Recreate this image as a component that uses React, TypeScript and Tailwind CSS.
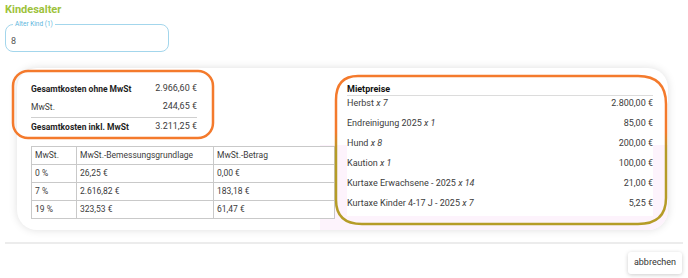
import React from "react";

const summary = [
  { label: "Gesamtkosten ohne MwSt", value: "2.966,60 €", bold: true },
  { label: "MwSt.", value: "244,65 €", bold: false },
];

const taxRows = [
  ["0 %", "26,25 €", "0,00 €"],
  ["7 %", "2.616,82 €", "183,18 €"],
  ["19 %", "323,53 €", "61,47 €"],
];

const prices: { name: string; qty: string; value: string }[] = [
  { name: "Herbst", qty: "x 7", value: "2.800,00 €" },
  { name: "Endreinigung 2025", qty: "x 1", value: "85,00 €" },
  { name: "Hund", qty: "x 8", value: "200,00 €" },
  { name: "Kaution", qty: "x 1", value: "100,00 €" },
  { name: "Kurtaxe Erwachsene - 2025", qty: "x 14", value: "21,00 €" },
  { name: "Kurtaxe Kinder 4-17 J - 2025", qty: "x 7", value: "5,25 €" },
];

export default function App() {
  return (
    <div
      className="relative w-[688px] h-[278px] bg-white overflow-hidden text-[#3c3c3c]"
      style={{ fontFamily: "Roboto, 'Liberation Sans', sans-serif" }}
    >
      <div className="px-[5px] pt-[3px]">
        <h2 className="text-[11px] leading-[14px] font-bold text-[#9dc23b]">Kindesalter</h2>
        <div className="relative mt-[7px] w-[164px] h-[28px] border border-[#a3d6ec] rounded-[8px]">
          <span className="absolute -top-[5px] left-[7px] px-[2px] bg-white text-[6.5px] leading-[8px] text-[#5cb6dc]">
            Alter Kind (1)
          </span>
          <div className="pl-[5px] pt-[10px] text-[9px] leading-[12px] text-[#555]">8</div>
        </div>
      </div>

      <div className="relative ml-[17px] mt-[16px] w-[651px] h-[162px] rounded-[20px] bg-white shadow-[0_0_8px_rgba(0,0,0,0.13)] flex">
        <div className="absolute left-[303px] top-[77px] w-[348px] h-[85px] bg-[#fdf3fc] rounded-br-[20px]" />
        <div className="relative pl-[14px] pt-[12px] w-[318px]">
          <div className="w-[166px] text-[8.5px]">
            {summary.map((r) => (
              <div
                key={r.label}
                className={`h-[18px] flex items-center justify-between ${r.bold ? "font-bold text-[#1e1e1e]" : "text-[#3c3c3c]"}`}
              >
                <span>{r.label}</span>
                <span className="font-normal text-[9px] text-[#3c3c3c]">{r.value}</span>
              </div>
            ))}
            <div className="mt-[1px] border-t border-[#cfcfcf] h-[19px] flex items-center justify-between">
              <span className="font-bold text-[#1e1e1e]">Gesamtkosten inkl. MwSt</span>
              <span className="text-[9px]">3.211,25 €</span>
            </div>
          </div>
          <table className="mt-[10px] w-[304px] border-collapse text-[8.5px] bg-white">
            <tbody>
              <tr className="h-[18px]">
                <td className="w-[45px] border border-[#c9c9c9] px-[3px]">MwSt.</td>
                <td className="w-[137px] border border-[#c9c9c9] px-[3px]">MwSt.-Bemessungsgrundlage</td>
                <td className="border border-[#c9c9c9] px-[3px]">MwSt.-Betrag</td>
              </tr>
              {taxRows.map((r) => (
                <tr key={r[0]} className="h-[18px]">
                  {r.map((c, i) => (
                    <td key={i} className="border border-[#c9c9c9] px-[3px]">
                      {c}
                    </td>
                  ))}
                </tr>
              ))}
            </tbody>
          </table>
        </div>
        <div className="relative ml-[12px] w-[306px] pt-[15px] text-[9px]">
          <div className="h-[13px] leading-[12px] font-bold text-[#111] border-b border-[#dcdcdc]">Mietpreise</div>
          <div className="bg-white">
            {prices.map((p) => (
              <div key={p.name} className="h-[20px] flex justify-between leading-[14px]">
                <span>
                  {p.name} <i>{p.qty}</i>
                </span>
                <span>{p.value}</span>
              </div>
            ))}
          </div>
        </div>
      </div>

      <div className="mx-[5px] mt-[12px] h-[2px] bg-[#ececec]" />
      <div className="flex justify-end pr-[6px] pt-[8px]">
        <button className="w-[54px] h-[22px] bg-white rounded-[3px] shadow-[0_1px_4px_rgba(0,0,0,0.2)] text-[9px] text-[#333]">
          abbrechen
        </button>
      </div>

      <svg className="absolute inset-0 pointer-events-none" width="688" height="278">
        <defs>
          <linearGradient id="g" gradientUnits="userSpaceOnUse" x1="0" y1="132" x2="0" y2="150">
            <stop offset="0" stopColor="#f47a2c" />
            <stop offset="1" stopColor="#b59c27" />
          </linearGradient>
        </defs>
        <rect x="13" y="71" width="200" height="67" rx="15" fill="none" stroke="#f47a2c" strokeWidth="2.5" />
        <path
          d="M358 76 H638 Q666 76 666 104 V198 Q666 224 638 224 H362 Q336 224 336 200 V100 Q336 76 358 76 Z"
          fill="none"
          stroke="url(#g)"
          strokeWidth="2.5"
        />
      </svg>
    </div>
  );
}
